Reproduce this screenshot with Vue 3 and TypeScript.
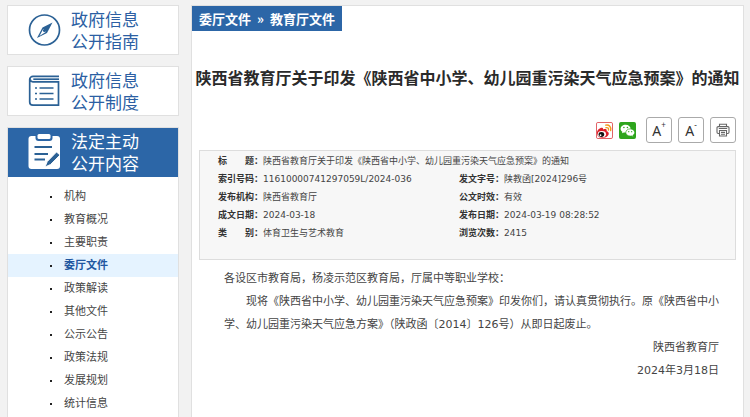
<script setup lang="ts">
import { ref } from 'vue'

interface Topic {
  label: string
  active?: boolean
}

interface Field {
  label: string
  value: string
}

const topics: Topic[] = [
  { label: '机构' },
  { label: '教育概况' },
  { label: '主要职责' },
  { label: '委厅文件', active: true },
  { label: '政策解读' },
  { label: '其他文件' },
  { label: '公示公告' },
  { label: '政策法规' },
  { label: '发展规划' },
  { label: '统计信息' },
]

const rows: Field[][] = [
  [
    { label: '索引号码：', value: '11610000741297059L/2024-036' },
    { label: '发文字号：', value: '陕教函[2024]296号' },
  ],
  [
    { label: '发布机构：', value: '陕西省教育厅' },
    { label: '公文时效：', value: '有效' },
  ],
  [
    { label: '成文日期：', value: '2024-03-18' },
    { label: '发布日期：', value: '2024-03-19 08:28:52' },
  ],
  [
    { label: '类　　别：', value: '体育卫生与艺术教育' },
    { label: '浏览次数：', value: '2415' },
  ],
]

const title = '陕西省教育厅关于印发《陕西省中小学、幼儿园重污染天气应急预案》的通知'

const step = ref(0)
function resize(delta: number): void {
  step.value = Math.min(2, Math.max(0, step.value + delta))
}
function printPage(): void {
  window.print()
}
</script>

<template>
  <div class="page">
    <aside class="side">
      <a class="card" href="#guide">
        <svg class="card-icon" viewBox="0 0 34 38" aria-hidden="true">
          <circle cx="16.500" cy="19" r="15" fill="none" stroke="#2b6195" stroke-width="1.700" />
          <path d="M24.500 11.500 19 22 9 27 14.500 16.500Z" fill="#2b6195" />
          <path d="M15.200 18 18 20.800 11.500 25Z" fill="#fff" />
          <circle cx="16.500" cy="19.500" r="1.600" fill="#2b6195" />
        </svg>
        <span class="card-text">政府信息<br />公开指南</span>
      </a>
      <a class="card" href="#rules">
        <svg class="card-icon" viewBox="0 0 34 38" aria-hidden="true">
          <g fill="none" stroke="#2b6195" stroke-width="1.700">
            <path d="M31 4.300H5a3.300 3.300 0 0 0-3.300 3.300V30a3.200 3.200 0 0 0 3.200 3.200H30.500V9.800H5a2.700 2.700 0 0 1-2.800-2.500" />
            <path d="M5.300 7.200H31" />
            <path d="M11.500 16H25.500M11.500 21.500H25.500M11.500 27H25.500" />
            <path d="M7 16h2M7 21.500h2M7 27h2" />
          </g>
        </svg>
        <span class="card-text">政府信息<br />公开制度</span>
      </a>
      <section class="panel">
        <a class="card card-on" href="#content">
          <svg class="card-icon" viewBox="0 0 34 38" aria-hidden="true">
            <rect x="0.500" y="3" width="31.500" height="33" rx="3" fill="#fff" />
            <path d="M7.500 2.500h17v2.500a3 3 0 0 1-3 3h-11a3 3 0 0 1-3-3Z" fill="#2c66a7" />
            <rect x="9.500" y="1" width="13" height="5" rx="1.500" fill="#fff" />
            <path d="M6.500 14H24M6.500 21H20M6.500 26.500H17" stroke="#2b6195" stroke-width="1.800" fill="none" />
            <path d="M28.500 19 32 22 22.500 31.500 17 34 19.300 28.500Z" fill="#2b6195" stroke="#fff" stroke-width="0.900" />
          </svg>
          <span class="card-text">法定主动<br />公开内容</span>
        </a>
        <ul class="topics">
          <li v-for="topic in topics" :key="topic.label">
            <a href="#list" :class="['topic', { 'topic-on': topic.active }]">{{ topic.label }}</a>
          </li>
        </ul>
      </section>
    </aside>

    <main class="main">
      <nav class="crumbs">
        <a href="#files">委厅文件</a>
        <span>»</span>
        <a href="#edu">教育厅文件</a>
      </nav>

      <h1 class="title">{{ title }}</h1>

      <div class="tools">
        <button class="share" type="button" aria-label="微博">
          <svg viewBox="0 0 18 18" aria-hidden="true">
            <rect x="0.500" y="0.500" width="17" height="17" rx="1.500" fill="#fff" stroke="#e0555a" />
            <path d="M1 11.500C1 8.500 4.500 5.600 6.600 6.100c1 .2 1 1.200.8 1.900 2-.8 4-.7 4 .9 0 .4-.1.700-.2 1 1.400.4 2.300 1 2.300 2.400 0 2.700-3.300 4.700-6.800 4.700S1 15 1 11.500Z" fill="#dc1e28" />
            <ellipse cx="6.200" cy="12.900" rx="4.400" ry="3.300" fill="#fff" />
            <ellipse cx="5.700" cy="13.200" rx="3" ry="2.600" fill="#111" />
            <circle cx="4.800" cy="14" r="0.900" fill="#fff" />
            <path d="M10.300 3.300c3.500-.9 6.200 1.900 5.200 5.700M10.600 6c1.800-.4 3.100.8 2.600 2.600" fill="none" stroke="#f39a1d" stroke-width="1.500" stroke-linecap="round" />
          </svg>
        </button>
        <button class="share" type="button" aria-label="微信">
          <svg viewBox="0 0 18 18" aria-hidden="true">
            <rect width="18" height="18" rx="2" fill="#2ea51d" />
            <path d="M7 2.800c-3 0-5.300 1.900-5.300 4.300 0 1.400.7 2.500 1.900 3.300L3.200 12l2-1c.6.100 1.200.2 1.900.2 2.900 0 5.200-1.800 5.200-4.200S10 2.800 7 2.800Z" fill="#fff" />
            <path d="M11.900 7.300c-2.600 0-4.700 1.600-4.700 3.800s2.100 3.800 4.700 3.800c.5 0 1-.1 1.500-.2l1.700.9-.4-1.500c1.200-.7 1.900-1.800 1.900-3 0-2.200-2.100-3.800-4.700-3.800Z" fill="#fff" stroke="#2ea51d" stroke-width="0.700" />
            <g fill="#2ea51d">
              <circle cx="5.200" cy="5.900" r="0.800" /><circle cx="8.900" cy="5.900" r="0.800" />
              <circle cx="10.300" cy="10.200" r="0.700" /><circle cx="13.400" cy="10.200" r="0.700" />
            </g>
          </svg>
        </button>
        <button class="tool" type="button" aria-label="放大字号" @click="resize(1)">A<sup>+</sup></button>
        <button class="tool" type="button" aria-label="缩小字号" @click="resize(-1)">A<sup>-</sup></button>
        <button class="tool" type="button" aria-label="打印" @click="printPage">
          <svg class="printer" viewBox="0 0 14 14" aria-hidden="true">
            <g fill="none" stroke="#666" stroke-width="1.100">
              <path d="M3.500 3.500V1.200h7v2.300" />
              <path d="M3.500 10.500H2.200A1.200 1.200 0 0 1 1 9.300V4.800a1.200 1.200 0 0 1 1.200-1.200h9.600A1.200 1.200 0 0 1 13 4.800v4.500a1.200 1.200 0 0 1-1.200 1.200h-1.300" />
              <path d="M3.500 7.500h7V13h-7ZM5 9.400h4M5 11.200h4M2.800 5.500h8.400" />
            </g>
          </svg>
        </button>
      </div>

      <div class="info">
        <table>
          <colgroup>
            <col class="col-label" /><col class="col-first" /><col class="col-label" /><col />
          </colgroup>
          <tbody>
            <tr>
              <th scope="row">标　　题：</th>
              <td colspan="3">{{ title }}</td>
            </tr>
            <tr v-for="row in rows" :key="row[0].label">
              <template v-for="field in row" :key="field.label">
                <th scope="row">{{ field.label }}</th>
                <td>{{ field.value }}</td>
              </template>
            </tr>
          </tbody>
        </table>
      </div>

      <article :class="['letter', `letter-${step}`]">
        <p>各设区市教育局，杨凌示范区教育局，厅属中等职业学校：</p>
        <p class="indent">现将《陕西省中小学、幼儿园重污染天气应急预案》印发你们，请认真贯彻执行。原《陕西省中小学、幼儿园重污染天气应急方案》（陕政函〔2014〕126号）从即日起废止。</p>
        <p class="sign">陕西省教育厅</p>
        <p class="sign">2024年3月18日</p>
      </article>
    </main>
  </div>
</template>

<style>
body {
  background: #f2f2f2;
}
</style>

<style scoped>
.page {
  box-sizing: border-box;
  min-height: 100vh;
  display: grid;
  grid-template-columns: 172px minmax(0, 1fr);
  column-gap: 12px;
  padding: 5px 6px 0 7px;
  font-family: "DejaVu Sans", "Noto Sans CJK SC", sans-serif;
  color: #444;
}

a {
  color: inherit;
  text-decoration: none;
}

.side {
  display: flex;
  flex-direction: column;
  gap: 11px;
}

.card {
  display: flex;
  align-items: center;
  gap: 9px;
  padding: 1px 0 1px 20px;
  background: #fff;
  border: 1px solid #e0e0e0;
  color: #2c5fa3;
}

.card-icon {
  width: 34px;
  height: 38px;
}

.card-text {
  padding-top: 2px;
  font-size: 17px;
  line-height: 22px;
}

.panel {
  flex: 1;
  background: #fff;
  border: 1px solid #e0e0e0;
  border-bottom: 0;
}

.card-on {
  border: 0;
  background: #2c66a7;
  color: #fff;
  padding-block: 1px 2px;
}

.topics {
  margin: 0;
  padding: 8px 0 0;
  list-style: none;
}

.topic {
  display: flex;
  align-items: center;
  gap: 12px;
  padding-left: 42px;
  font-size: 11px;
  line-height: 23px;
}

.topic::before {
  content: "";
  width: 2px;
  height: 2px;
  background: #222;
}

.topic-on {
  background: #e5f3ff;
  color: #2257a0;
  font-weight: 700;
}

.main {
  background: #fff;
  border: 1px solid #e0e0e0;
  border-bottom: 0;
}

.crumbs {
  display: flex;
  gap: 6px;
  width: fit-content;
  padding: 0 7px;
  background: #2c66a7;
  color: #fff;
  font-family: "Noto Sans CJK SC", sans-serif;
  font-size: 13px;
  font-weight: 700;
  line-height: 25px;
}

.title {
  margin: 34px 0 28px;
  font-family: "Noto Sans CJK SC", sans-serif;
  font-size: 16px;
  font-weight: 700;
  line-height: 24px;
  text-align: center;
  color: #2a2a2a;
}

.tools {
  display: flex;
  justify-content: flex-end;
  align-items: center;
  gap: 6px;
  padding-right: 7px;
}

.share {
  width: 17px;
  height: 17px;
  padding: 0;
  border: 0;
  background: none;
}

.share svg {
  display: block;
}

.share + .tool {
  margin-left: 4px;
}

.tool {
  display: flex;
  justify-content: center;
  align-items: center;
  width: 26px;
  height: 26px;
  padding: 0;
  border: 1px solid #aaa;
  border-radius: 3px;
  background: #fff;
  color: #333;
  font-family: "Noto Sans", sans-serif;
  font-size: 14px;
}

.tool sup {
  align-self: flex-start;
  font-size: 8px;
  line-height: 14px;
}

.printer {
  width: 14px;
  height: 14px;
}

.info {
  margin: 7px 7px 0;
  padding: 1px 18px 17px;
  border: 1px solid #ddd;
  background: #f7f7f7;
}

table {
  width: 100%;
  table-layout: fixed;
  border-collapse: collapse;
  font-size: 9px;
  line-height: 18px;
}

.col-label {
  width: 45px;
}

.col-first {
  width: 196px;
}

th,
td {
  height: 18px;
  padding: 0;
  text-align: left;
  white-space: nowrap;
}

th {
  color: #333;
}

.letter {
  padding: 7px 24px 0 32px;
  font-size: 11px;
  line-height: 23px;
}

.letter-1 {
  font-size: 13px;
}

.letter-2 {
  font-size: 15px;
}

.letter p {
  margin: 0;
}

.letter .indent {
  text-indent: 2em;
}

.letter .sign {
  text-align: right;
}
</style>
